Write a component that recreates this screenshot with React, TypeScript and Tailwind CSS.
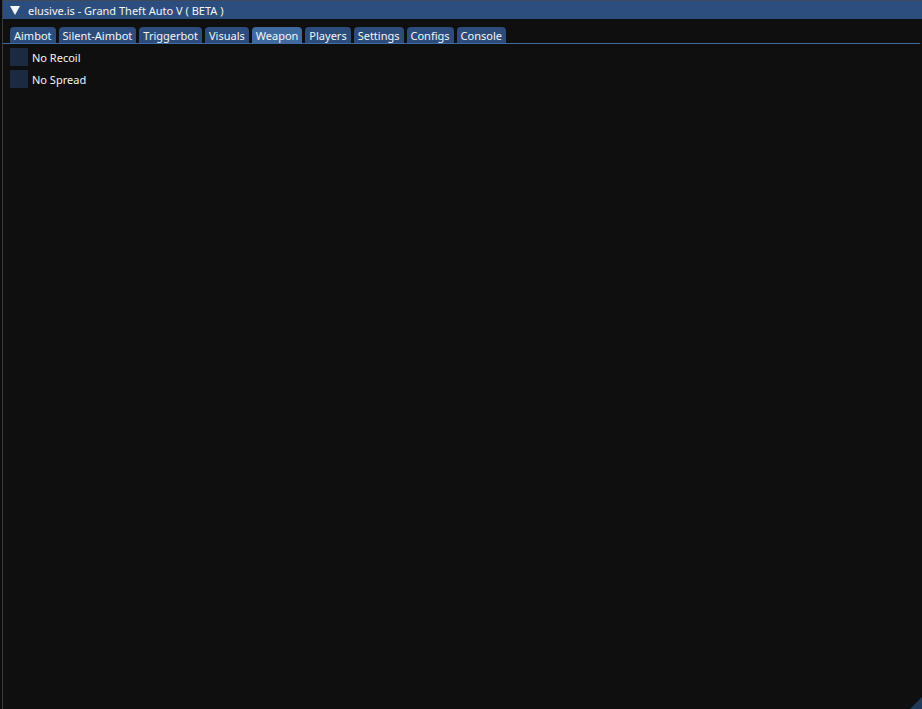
const tabs = [
  "Aimbot",
  "Silent-Aimbot",
  "Triggerbot",
  "Visuals",
  "Weapon",
  "Players",
  "Settings",
  "Configs",
  "Console",
];

const options = ["No Recoil", "No Spread"];

export default function App() {
  return (
    <div
      className="relative h-[709px] w-[922px] overflow-hidden bg-[#0b0b0b] pl-[2px] text-[11px] text-[#f5f5f5]"
      style={{ fontFamily: '"Noto Sans", "Open Sans", sans-serif' }}
    >
      <div className="flex h-full flex-col border-l border-[#3b3b40] bg-[#0f0f0f]">
        {/* title bar */}
        <div className="flex h-[19px] items-center border-t border-[#3e4a5c] bg-[#2c4e7e] pl-[7px]">
          <svg className="mr-[8px]" width="10" height="9" viewBox="0 0 10 9">
            <polygon points="0,0 10,0 5,9" fill="#f5f5f5" />
          </svg>
          <span className="leading-none">elusive.is - Grand Theft Auto V ( BETA )</span>
        </div>

        {/* tab bar */}
        <div className="mt-[8px] flex gap-[3px] pl-[7px]">
          {tabs.map((t) => (
            <div
              key={t}
              className={
                "flex h-[16px] items-center rounded-t-[4px] px-[4px] leading-none " +
                (t === "Weapon" ? "bg-[#3f6aa0]" : "bg-[#2c4d7c]")
              }
            >
              {t}
            </div>
          ))}
        </div>
        <div className="mr-[2px] h-[1px] bg-[#3f6aa0]" />

        {/* checkboxes */}
        <div className="mt-[4px] flex flex-col gap-[4px] pl-[7px]">
          {options.map((o) => (
            <div key={o} className="flex items-center gap-[4px]">
              <div className="h-[18px] w-[18px] bg-[#1b2a40]" />
              <span className="leading-none">{o}</span>
            </div>
          ))}
        </div>
      </div>

      {/* resize grip */}
      <svg className="absolute bottom-0 right-0" width="12" height="12" viewBox="0 0 12 12">
        <polygon points="12,0 12,12 0,12" fill="#203a58" />
      </svg>
    </div>
  );
}
